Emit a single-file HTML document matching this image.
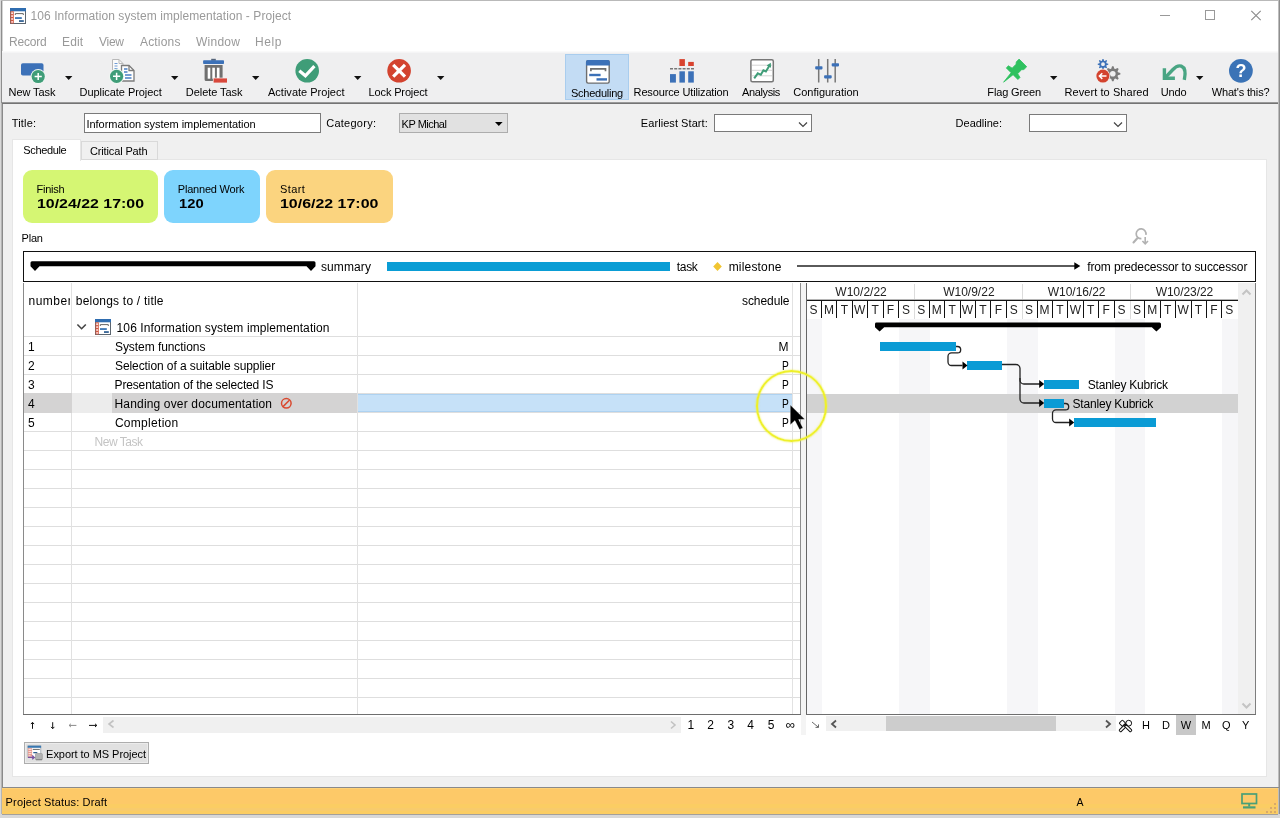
<!DOCTYPE html>
<html><head><meta charset="utf-8"><title>Project</title>
<style>
html,body{margin:0;padding:0;background:#f0f0f0;}
body{width:1280px;height:818px;position:relative;overflow:hidden;font-family:"Liberation Sans",sans-serif;}
.b{position:absolute;display:block;}
.t{position:absolute;white-space:nowrap;line-height:16px;height:16px;}
</style></head><body><div id="w" style="position:absolute;left:0;top:0;width:1280px;height:818px;will-change:transform">
<div class="b" style="left:0px;top:0px;width:1280px;height:818px;background:#f0f0f0;"></div>
<div class="b" style="left:0px;top:0px;width:1280px;height:53px;background:#ffffff;"></div>
<div class="b" style="left:0px;top:0px;width:1280px;height:1px;background:#b9b9b9;"></div>
<div class="b" style="left:0px;top:0px;width:1px;height:818px;background:#d8d8d8;"></div>
<div class="b" style="left:1px;top:1px;width:1px;height:102px;background:#8e8e8e;"></div>
<div class="b" style="left:2px;top:1px;width:1px;height:102px;background:#d4d4d4;"></div>
<div class="b" style="left:1px;top:103px;width:1px;height:712px;background:#b4b4b4;"></div>
<div class="b" style="left:2px;top:103px;width:1px;height:712px;background:#8a8a8a;"></div>
<div class="b" style="left:1278px;top:0px;width:1px;height:815px;background:#bdbdbd;"></div>
<div class="b" style="left:1279px;top:0px;width:1px;height:818px;background:#8e8e8e;"></div>
<svg class="b" style="left:10px;top:7.5px;" width="16" height="16" viewBox="0 0 16 16"><rect x="0.500" y="0.500" width="15" height="15" fill="#fff" stroke="#5c6670"/>
<rect x="0" y="0" width="16" height="3.300" fill="#2f6db0"/>
<rect x="0.500" y="3.300" width="3.300" height="12.200" fill="#d0583f"/>
<rect x="1.200" y="4.300" width="1.900" height="1.800" fill="#fbe3e0"/><rect x="1.200" y="7.200" width="1.900" height="1.800" fill="#fbd0cc"/><rect x="1.200" y="10.100" width="1.900" height="1.800" fill="#fbd0cc"/><rect x="1.200" y="13" width="1.900" height="1.800" fill="#fbc4c4"/>
<path d="M5.300 7v-1.400h8v1.400" fill="none" stroke="#666" stroke-width="1"/>
<rect x="5" y="9.200" width="6.800" height="1.700" fill="#2f6db0"/><rect x="9" y="12.200" width="4.800" height="1.700" fill="#2a5a8e"/></svg>
<div class="t" style="left:30.60px;top:8.00px;font-size:12px;color:#9a9a9a;letter-spacing:0.066px;">106 Information system implementation - Project</div>
<svg class="b" style="left:1160px;top:8px;" width="110" height="16" viewBox="0 0 110 16"><path d="M0 7.5h10" stroke="#999" stroke-width="1" fill="none"/>
<rect x="45.5" y="2.5" width="9" height="9" fill="none" stroke="#999"/>
<path d="M91.300 2.800l9.400 9.400M100.700 2.800l-9.400 9.400" stroke="#8a8a8a" stroke-width="1.100" fill="none"/></svg>
<div class="t" style="left:9.05px;top:34.00px;font-size:12px;color:#999999;letter-spacing:-0.192px;">Record</div>
<div class="t" style="left:62.05px;top:34.00px;font-size:12px;color:#999999;letter-spacing:0.118px;">Edit</div>
<div class="t" style="left:98.95px;top:34.00px;font-size:12px;color:#999999;letter-spacing:-0.248px;">View</div>
<div class="t" style="left:140.00px;top:34.00px;font-size:12px;color:#999999;letter-spacing:0.174px;">Actions</div>
<div class="t" style="left:195.95px;top:34.00px;font-size:12px;color:#999999;letter-spacing:0.274px;">Window</div>
<div class="t" style="left:255.05px;top:34.00px;font-size:12px;color:#999999;letter-spacing:0.581px;">Help</div>
<div class="b" style="left:2px;top:52px;width:1276px;height:50px;background:#efeff0;"></div>
<div class="b" style="left:2px;top:51px;width:1276px;height:1px;background:#fafafa;"></div>
<div class="b" style="left:2px;top:52px;width:1276px;height:1px;background:#f5f5f6;"></div>
<div class="b" style="left:2px;top:102px;width:1276px;height:1px;background:#999999;"></div>
<div class="b" style="left:2px;top:103px;width:1276px;height:1px;background:#747474;"></div>
<div class="b" style="left:565px;top:54px;width:64px;height:46px;background:#c3dcf4;border:1px solid #a9cdee;box-sizing:border-box;"></div>
<div class="t" style="left:8.60px;top:84.00px;font-size:11px;color:#000;letter-spacing:-0.083px;">New Task</div>
<div class="t" style="left:79.60px;top:84.00px;font-size:11px;color:#000;letter-spacing:-0.059px;">Duplicate Project</div>
<div class="t" style="left:185.85px;top:84.00px;font-size:11px;color:#000;letter-spacing:-0.062px;">Delete Task</div>
<div class="t" style="left:268.00px;top:84.00px;font-size:11px;color:#000;letter-spacing:0.009px;">Activate Project</div>
<div class="t" style="left:368.60px;top:84.00px;font-size:11px;color:#000;letter-spacing:-0.143px;">Lock Project</div>
<div class="t" style="left:633.60px;top:84.00px;font-size:11px;color:#000;letter-spacing:-0.145px;">Resource Utilization</div>
<div class="t" style="left:742.00px;top:84.00px;font-size:11px;color:#000;letter-spacing:-0.373px;">Analysis</div>
<div class="t" style="left:793.20px;top:84.00px;font-size:11px;color:#000;letter-spacing:0.003px;">Configuration</div>
<div class="t" style="left:987.35px;top:84.00px;font-size:11px;color:#000;letter-spacing:-0.135px;">Flag Green</div>
<div class="t" style="left:1064.60px;top:84.00px;font-size:11px;color:#000;letter-spacing:0.061px;">Revert to Shared</div>
<div class="t" style="left:1160.70px;top:84.00px;font-size:11px;color:#000;letter-spacing:-0.110px;">Undo</div>
<div class="t" style="left:1211.70px;top:84.00px;font-size:11px;color:#000;letter-spacing:-0.150px;">What&#x27;s this?</div>
<div class="t" style="left:571.00px;top:85.00px;font-size:11px;color:#000;letter-spacing:-0.252px;">Scheduling</div>
<svg class="b" style="left:65px;top:76px;" width="8" height="5" viewBox="0 0 8 5"><path d="M0 0h7.4l-3.7 4z" fill="#111"/></svg>
<svg class="b" style="left:171px;top:76px;" width="8" height="5" viewBox="0 0 8 5"><path d="M0 0h7.4l-3.7 4z" fill="#111"/></svg>
<svg class="b" style="left:251.75px;top:76px;" width="8" height="5" viewBox="0 0 8 5"><path d="M0 0h7.4l-3.7 4z" fill="#111"/></svg>
<svg class="b" style="left:354px;top:76px;" width="8" height="5" viewBox="0 0 8 5"><path d="M0 0h7.4l-3.7 4z" fill="#111"/></svg>
<svg class="b" style="left:437px;top:76px;" width="8" height="5" viewBox="0 0 8 5"><path d="M0 0h7.4l-3.7 4z" fill="#111"/></svg>
<svg class="b" style="left:1050px;top:76px;" width="8" height="5" viewBox="0 0 8 5"><path d="M0 0h7.4l-3.7 4z" fill="#111"/></svg>
<svg class="b" style="left:1195.75px;top:76px;" width="8" height="5" viewBox="0 0 8 5"><path d="M0 0h7.4l-3.7 4z" fill="#111"/></svg>
<svg class="b" style="left:18px;top:58px;" width="30" height="28" viewBox="0 0 30 28"><rect x="3" y="5.300" width="22.500" height="12.200" rx="1.800" fill="#3c71b8"/><circle cx="20.2" cy="18.5" r="7.6" fill="#eef6f1"/><circle cx="20.2" cy="18.5" r="6.6" fill="#3f9d78"/><path d="M16.599999999999998 18.5h7.200M20.2 14.9v7.200" stroke="#fff" stroke-width="1.500"/></svg>
<svg class="b" style="left:108px;top:57px;" width="30" height="28" viewBox="0 0 30 28"><path d="M4.500 2.500h6.500l4 4v9h-10.500z" fill="#fbfbfb" stroke="#b9b9b9" stroke-width="1"/>
<path d="M11 2.500v4h4" fill="none" stroke="#b9b9b9"/>
<path d="M6.500 6.500h3M6.500 9h3M6.500 11.500h3" stroke="#6f9bd6" stroke-width="1.200"/>
<path d="M13.500 8.500h7.500l5 5v10.500h-12.500z" fill="#fff" stroke="#7c7c7c" stroke-width="1.300"/>
<path d="M21 8.500v5h5" fill="none" stroke="#7c7c7c" stroke-width="1.300"/>
<path d="M16 12h3.500M16 15h3.500M17 18h6.500M17 21h6.500" stroke="#4a7fc4" stroke-width="1.400"/><circle cx="8.6" cy="19.3" r="7.6" fill="#eef6f1"/><circle cx="8.6" cy="19.3" r="6.6" fill="#3f9d78"/><path d="M5.0 19.3h7.200M8.6 15.700000000000001v7.200" stroke="#fff" stroke-width="1.500"/></svg>
<svg class="b" style="left:200px;top:57px;" width="30" height="28" viewBox="0 0 30 28"><rect x="11.200" y="1.800" width="4.600" height="2" fill="#56657a"/>
<rect x="3.100" y="3.300" width="20.900" height="3.700" rx="0.800" fill="#3c71b8"/>
<path d="M4.600 8h18v14.400a1.500 1.500 0 0 1-1.500 1.500h-15a1.500 1.500 0 0 1-1.500-1.500z" fill="#707070"/>
<rect x="7.700" y="10.700" width="2.600" height="11" fill="#fff"/><rect x="12.300" y="10.700" width="2.600" height="11" fill="#fff"/><rect x="16.900" y="10.700" width="2.600" height="11" fill="#fff"/>
<rect x="12.900" y="20.700" width="14.800" height="5.600" fill="#f4eeee"/>
<rect x="13.600" y="21.400" width="13.400" height="4.200" fill="#d8483c"/></svg>
<svg class="b" style="left:294px;top:58px;" width="26" height="26" viewBox="0 0 26 26"><circle cx="13.200" cy="12.800" r="11.800" fill="#3f9d78"/><path d="M5.300 12.800l6.100 5l9-9.600" fill="none" stroke="#fff" stroke-width="3.200"/></svg>
<svg class="b" style="left:386px;top:58px;" width="26" height="26" viewBox="0 0 26 26"><circle cx="13.100" cy="12.800" r="11.800" fill="#d3432f"/><path d="M7.200 6.900l11.800 11.800M19 6.900l-11.800 11.800" fill="none" stroke="#fff" stroke-width="3.200"/></svg>
<svg class="b" style="left:584px;top:58px;" width="28" height="28" viewBox="0 0 28 28"><rect x="2.600" y="2.700" width="22.600" height="22.400" rx="1.500" fill="#fff" stroke="#6e6e6e" stroke-width="1.400"/>
<path d="M2 4a2 2 0 0 1 2-2h19.800a2 2 0 0 1 2 2v3.500h-23.800z" fill="#3c71b8"/>
<path d="M6.900 13.200v-2.300h14.600v2.300" fill="none" stroke="#6e6e6e" stroke-width="1.700"/>
<rect x="5.200" y="15.800" width="11.400" height="2.400" fill="#3c71b8"/><rect x="12.500" y="20.200" width="10.500" height="2.400" fill="#3c71b8"/></svg>
<svg class="b" style="left:668px;top:57px;" width="28" height="28" viewBox="0 0 28 28"><rect x="11.400" y="2.100" width="5.500" height="6.900" fill="#d8432f"/><rect x="20.200" y="4.900" width="5.600" height="4.100" fill="#d8432f"/>
<path d="M2 11.700h24" stroke="#777" stroke-width="1.500" stroke-dasharray="3 1.200"/>
<rect x="2" y="17.100" width="5.900" height="8.500" fill="#3c71b8"/><rect x="11.400" y="14.300" width="5.500" height="11.300" fill="#3c71b8"/><rect x="20.200" y="14.300" width="5.600" height="11.300" fill="#3c71b8"/></svg>
<svg class="b" style="left:748px;top:57px;" width="28" height="28" viewBox="0 0 28 28"><rect x="2.900" y="2.800" width="22.400" height="22" rx="1.500" fill="#fff" stroke="#777" stroke-width="1.500"/>
<path d="M4 8.200h20M4 13.300h20M4 18.800h20" stroke="#d4d4d4" stroke-width="1"/>
<path d="M6.200 21.400l3.600-5.100l3 1.500l2.600-4.500l2.500 1.200l3.600-6" fill="none" stroke="#3f9d78" stroke-width="2"/>
<path d="M18.600 8.500l4.200-2.800l0.200 5z" fill="#3f9d78"/></svg>
<svg class="b" style="left:813px;top:57px;" width="28" height="28" viewBox="0 0 28 28"><path d="M5.700 2.100v23.500M14.700 2.100v23.500M22.200 2.100v23.500" stroke="#777" stroke-width="1.500"/>
<rect x="2.200" y="9.200" width="7.300" height="3.200" rx="0.800" fill="#3c71b8"/><rect x="11.100" y="18.300" width="7.600" height="3.100" rx="0.800" fill="#3c71b8"/><rect x="18.700" y="6.300" width="7.300" height="3.100" rx="0.800" fill="#3c71b8"/></svg>
<svg class="b" style="left:1000px;top:57px;" width="30" height="28" viewBox="0 0 30 28"><polygon points="3.60,25.20 13.08,17.70 17.88,22.51 20.00,20.39 17.67,16.64 21.56,12.75 23.89,12.54 26.72,9.71 19.09,2.08 16.26,4.91 16.05,7.24 12.16,11.13 8.41,8.80 6.29,10.92 11.10,15.72 3.60,25.20" fill="#2fc15f" stroke="#2fc15f" stroke-width="0.800" stroke-linejoin="round"/></svg>
<svg class="b" style="left:1093px;top:57px;" width="30" height="28" viewBox="0 0 30 28"><path d="M27.36 16.06L27.36 17.54L24.97 18.37L24.56 19.35L25.67 21.62L24.62 22.67L22.35 21.56L21.37 21.97L20.54 24.36L19.06 24.36L18.23 21.97L17.25 21.56L14.98 22.67L13.93 21.62L15.04 19.35L14.63 18.37L12.24 17.54L12.24 16.06L14.63 15.23L15.04 14.25L13.93 11.98L14.98 10.93L17.25 12.04L18.23 11.63L19.06 9.24L20.54 9.24L21.37 11.63L22.35 12.04L24.62 10.93L25.67 11.98L24.56 14.25L24.97 15.23ZM22.6 16.8a2.8 2.8 0 1 0 -5.6 0a2.8 2.8 0 1 0 5.6 0Z" fill="#7b7b7b" fill-rule="evenodd"/><path d="M15.27 6.68L15.27 7.72L13.54 8.27L13.26 8.94L14.10 10.56L13.36 11.30L11.74 10.46L11.07 10.74L10.52 12.47L9.48 12.47L8.93 10.74L8.26 10.46L6.64 11.30L5.90 10.56L6.74 8.94L6.46 8.27L4.73 7.72L4.73 6.68L6.46 6.13L6.74 5.46L5.90 3.84L6.64 3.10L8.26 3.94L8.93 3.66L9.48 1.93L10.52 1.93L11.07 3.66L11.74 3.94L13.36 3.10L14.10 3.84L13.26 5.46L13.54 6.13ZM11.9 7.2a1.9 1.9 0 1 0 -3.8 0a1.9 1.9 0 1 0 3.8 0Z" fill="#3c71b8" fill-rule="evenodd"/><circle cx="9.900" cy="19.100" r="7.300" fill="#f3ecea"/><circle cx="9.900" cy="19.100" r="6.500" fill="#d3432f"/><path d="M13.500 19.100h-7M9.300 16.300l-2.900 2.800l2.900 2.800" fill="none" stroke="#fff" stroke-width="1.500"/></svg>
<svg class="b" style="left:1158px;top:57px;" width="32" height="28" viewBox="0 0 32 28"><g fill="none" stroke="#49a583" stroke-width="3.400">
<path d="M26.300 22.900c1.400-6.500 1.200-12-3-13.700c-3.500-1.300-6 0.800-8.600 3.500l-7.200 7.600"/>
<path d="M6.400 11.200v10h10.500"/></g></svg>
<svg class="b" style="left:1228px;top:58px;" width="26" height="26" viewBox="0 0 26 26"><circle cx="12.900" cy="12.800" r="11.900" fill="#3b73b6"/><text x="12.900" y="19" text-anchor="middle" font-family="Liberation Sans, sans-serif" font-weight="bold" font-size="18" fill="#fff">?</text></svg>
<div class="t" style="left:11.80px;top:115.00px;font-size:11px;color:#000;letter-spacing:0.145px;">Title:</div>
<div class="b" style="left:84px;top:113px;width:237px;height:20px;background:#fff;border:1px solid #7a7a7a;box-sizing:border-box;"></div>
<div class="t" style="left:86.50px;top:116.00px;font-size:11px;color:#000;letter-spacing:-0.044px;">Information system implementation</div>
<div class="t" style="left:326.20px;top:115.00px;font-size:11px;color:#000;letter-spacing:0.258px;">Category:</div>
<div class="b" style="left:399px;top:113px;width:109px;height:20px;background:#e1e1e1;border:1px solid #adadad;box-sizing:border-box;"></div>
<div class="t" style="left:401.60px;top:116.00px;font-size:11px;color:#000;letter-spacing:-0.497px;">KP Michal</div>
<svg class="b" style="left:494.5px;top:121.5px;" width="8" height="5" viewBox="0 0 8 5"><path d="M0 0h7.6l-3.8 4z" fill="#000"/></svg>
<div class="t" style="left:640.85px;top:115.00px;font-size:11px;color:#000;letter-spacing:0.060px;">Earliest Start:</div>
<div class="b" style="left:714px;top:114px;width:98px;height:18px;background:#fff;border:1px solid #7a7a7a;box-sizing:border-box;"></div>
<svg class="b" style="left:798px;top:121px;" width="10" height="7" viewBox="0 0 10 7"><path d="M1 1.5l4 4l4-4" stroke="#444" stroke-width="1.2" fill="none"/></svg>
<div class="t" style="left:955.60px;top:115.00px;font-size:11px;color:#000;letter-spacing:-0.015px;">Deadline:</div>
<div class="b" style="left:1029px;top:114px;width:98px;height:18px;background:#fff;border:1px solid #7a7a7a;box-sizing:border-box;"></div>
<svg class="b" style="left:1113px;top:121px;" width="10" height="7" viewBox="0 0 10 7"><path d="M1 1.5l4 4l4-4" stroke="#444" stroke-width="1.2" fill="none"/></svg>
<div class="b" style="left:12px;top:159px;width:1255px;height:618px;background:#fff;border:1px solid #e6e6e6;box-sizing:border-box;"></div>
<div class="b" style="left:81px;top:141px;width:77px;height:19px;background:#f0f0f0;border:1px solid #d9d9d9;box-sizing:border-box;"></div>
<div class="b" style="left:12px;top:139px;width:69px;height:22px;background:#fff;border:1px solid #e6e6e6;border-bottom:none;box-sizing:border-box;"></div>
<div class="t" style="left:23.25px;top:142.00px;font-size:11px;color:#000;letter-spacing:-0.343px;">Schedule</div>
<div class="t" style="left:89.95px;top:143.00px;font-size:11px;color:#000;letter-spacing:-0.132px;">Critical Path</div>
<div class="b" style="left:22.5px;top:170px;width:135.5px;height:52.5px;background:#d5f673;border-radius:9px;"></div>
<div class="b" style="left:164px;top:170px;width:96px;height:52.5px;background:#7ed4fd;border-radius:9px;"></div>
<div class="b" style="left:266px;top:170px;width:127px;height:52.5px;background:#fbd47f;border-radius:9px;"></div>
<div class="t" style="left:36.60px;top:181.00px;font-size:11px;color:#000;letter-spacing:-0.255px;">Finish</div>
<div class="t" style="left:37.02px;top:196.00px;font-size:13px;color:#000;font-weight:bold;transform:scaleX(1.2237);transform-origin:0 0;">10/24/22 17:00</div>
<div class="t" style="left:177.85px;top:181.00px;font-size:11px;color:#000;letter-spacing:-0.213px;">Planned Work</div>
<div class="t" style="left:178.79px;top:196.00px;font-size:13px;color:#000;font-weight:bold;transform:scaleX(1.1346);transform-origin:0 0;">120</div>
<div class="t" style="left:280.10px;top:181.00px;font-size:11px;color:#000;letter-spacing:0.356px;">Start</div>
<div class="t" style="left:280.27px;top:196.00px;font-size:13px;color:#000;font-weight:bold;transform:scaleX(1.2262);transform-origin:0 0;">10/6/22 17:00</div>
<div class="t" style="left:21.60px;top:230.00px;font-size:11px;color:#000;letter-spacing:-0.249px;">Plan</div>
<svg class="b" style="left:1130px;top:227px;" width="22" height="20" viewBox="0 0 22 20"><g fill="none" stroke="#b2b2b2">
<path d="M15.900 7.800a4.900 4.900 0 1 0-4.500 3.900" stroke-width="1.700"/>
<path d="M7.300 11.300l-3.800 4.200" stroke-width="2.100" stroke-linecap="round"/>
<path d="M15.200 10v6.500M12.400 14l2.800 2.900l2.800-2.900" stroke-width="1.600"/></g></svg>
<div class="b" style="left:23px;top:251px;width:1233px;height:31px;background:#fff;border:1.5px solid #111;box-sizing:border-box;"></div>
<svg class="b" style="left:30px;top:261px;" width="286" height="10" viewBox="0 0 286 10"><path d="M2 0.3h282a1.5 1.5 0 0 1 1.5 1.5v3.4l-4.5 4.8l-4.5-4.8h-267l-4.500 4.8l-4.500-4.800v-3.400a1.500 1.500 0 0 1 1.500-1.500z" fill="#000"/></svg>
<div class="t" style="left:320.95px;top:259.00px;font-size:12px;color:#000;letter-spacing:0.119px;">summary</div>
<div class="b" style="left:387px;top:262.3px;width:282.7px;height:8.6px;background:#0a9dd5;"></div>
<div class="t" style="left:676.85px;top:259.00px;font-size:12px;color:#000;letter-spacing:-0.353px;">task</div>
<svg class="b" style="left:712px;top:261px;" width="11" height="11" viewBox="0 0 11 11"><path d="M5.5 1l4.300 4.500l-4.300 4.500l-4.300-4.500z" fill="#f1c531"/></svg>
<div class="t" style="left:728.65px;top:259.00px;font-size:12px;color:#000;letter-spacing:0.189px;">milestone</div>
<div class="b" style="left:796.5px;top:265.2px;width:279px;height:1.4px;background:#5a5a5a;"></div>
<svg class="b" style="left:1074px;top:262px;" width="7" height="8" viewBox="0 0 7 8"><path d="M0.300 0.300l6 3.700l-6 3.700z" fill="#000"/></svg>
<div class="t" style="left:1087.25px;top:259.00px;font-size:12px;color:#000;letter-spacing:-0.140px;">from predecessor to successor</div>
<div class="b" style="left:23px;top:283px;width:778px;height:432px;background:#fff;"></div>
<div class="b" style="left:24px;top:336px;width:776px;height:1px;background:#dedede;"></div>
<div class="b" style="left:24px;top:355px;width:776px;height:1px;background:#dedede;"></div>
<div class="b" style="left:24px;top:374px;width:776px;height:1px;background:#dedede;"></div>
<div class="b" style="left:24px;top:393px;width:776px;height:1px;background:#dedede;"></div>
<div class="b" style="left:24px;top:412px;width:776px;height:1px;background:#dedede;"></div>
<div class="b" style="left:24px;top:431px;width:776px;height:1px;background:#dedede;"></div>
<div class="b" style="left:24px;top:450px;width:776px;height:1px;background:#dedede;"></div>
<div class="b" style="left:24px;top:469px;width:776px;height:1px;background:#dedede;"></div>
<div class="b" style="left:24px;top:488px;width:776px;height:1px;background:#dedede;"></div>
<div class="b" style="left:24px;top:507px;width:776px;height:1px;background:#dedede;"></div>
<div class="b" style="left:24px;top:526px;width:776px;height:1px;background:#dedede;"></div>
<div class="b" style="left:24px;top:545px;width:776px;height:1px;background:#dedede;"></div>
<div class="b" style="left:24px;top:564px;width:776px;height:1px;background:#dedede;"></div>
<div class="b" style="left:24px;top:583px;width:776px;height:1px;background:#dedede;"></div>
<div class="b" style="left:24px;top:602px;width:776px;height:1px;background:#dedede;"></div>
<div class="b" style="left:24px;top:621px;width:776px;height:1px;background:#dedede;"></div>
<div class="b" style="left:24px;top:640px;width:776px;height:1px;background:#dedede;"></div>
<div class="b" style="left:24px;top:659px;width:776px;height:1px;background:#dedede;"></div>
<div class="b" style="left:24px;top:678px;width:776px;height:1px;background:#dedede;"></div>
<div class="b" style="left:24px;top:697px;width:776px;height:1px;background:#dedede;"></div>
<div class="b" style="left:71px;top:283px;width:1px;height:431px;background:#e1e1e1;"></div>
<div class="b" style="left:357px;top:283px;width:1px;height:431px;background:#e1e1e1;"></div>
<div class="b" style="left:792px;top:283px;width:1px;height:431px;background:#e2e2e2;"></div>
<div class="b" style="left:24px;top:393px;width:48px;height:20px;background:#d4d3d3;"></div>
<div class="b" style="left:72px;top:393px;width:40px;height:20px;background:#ececec;"></div>
<div class="b" style="left:112px;top:393px;width:245px;height:20px;background:#d4d3d3;"></div>
<div class="b" style="left:358px;top:394px;width:434px;height:18px;background:#c6e1f8;border-top:1px solid #aed2f1;border-bottom:1px solid #aed2f1;box-sizing:border-box;"></div>
<div class="b" style="left:23px;top:283px;width:1px;height:432px;background:#8a8a8a;"></div>
<div class="b" style="left:800px;top:283px;width:1px;height:432px;background:#8e8e8e;"></div>
<div class="b" style="left:23px;top:714px;width:778px;height:1px;background:#6e6e6e;"></div>
<div class="b" style="left:24px;top:290px;width:45.5px;height:20px;overflow:hidden">
<div class="t" style="left:4.500px;top:3px;font-size:12px;letter-spacing:0.500px">number</div></div>
<div class="t" style="left:75.75px;top:293.00px;font-size:12px;color:#000;letter-spacing:0.219px;">belongs to / title</div>
<div class="t" style="left:742.00px;top:293.00px;font-size:12px;color:#000;letter-spacing:-0.073px;">schedule</div>
<svg class="b" style="left:76px;top:323px;" width="12" height="8" viewBox="0 0 12 8"><path d="M1.400 1.500l4.200 4.200l4.200-4.200" stroke="#444" stroke-width="1.600" fill="none"/></svg>
<svg class="b" style="left:95px;top:319px;" width="16" height="16" viewBox="0 0 16 16"><rect x="0.500" y="0.500" width="15" height="15" fill="#fff" stroke="#5c6670"/>
<rect x="0" y="0" width="16" height="3.300" fill="#2f6db0"/>
<rect x="0.500" y="3.300" width="3.300" height="12.200" fill="#d0583f"/>
<rect x="1.200" y="4.300" width="1.900" height="1.800" fill="#fbe3e0"/><rect x="1.200" y="7.200" width="1.900" height="1.800" fill="#fbd0cc"/><rect x="1.200" y="10.100" width="1.900" height="1.800" fill="#fbd0cc"/><rect x="1.200" y="13" width="1.900" height="1.800" fill="#fbc4c4"/>
<path d="M5.300 7v-1.400h8v1.400" fill="none" stroke="#666" stroke-width="1"/>
<rect x="5" y="9.200" width="6.800" height="1.700" fill="#2f6db0"/><rect x="9" y="12.200" width="4.800" height="1.700" fill="#2a5a8e"/></svg>
<div class="t" style="left:116.60px;top:320.00px;font-size:12px;color:#000;letter-spacing:0.097px;">106 Information system implementation</div>
<div class="t" style="left:28.00px;top:339.00px;font-size:12px;color:#000;">1</div>
<div class="t" style="left:115.00px;top:339.00px;font-size:12px;color:#000;letter-spacing:-0.065px;">System functions</div>
<div class="t" style="left:778.50px;top:339.00px;font-size:12px;color:#000;">M</div>
<div class="t" style="left:28.00px;top:358.00px;font-size:12px;color:#000;">2</div>
<div class="t" style="left:115.00px;top:358.00px;font-size:12px;color:#000;letter-spacing:-0.083px;">Selection of a suitable supplier</div>
<div class="t" style="left:782.00px;top:358.00px;font-size:12px;color:#000;transform:scaleX(0.85);transform-origin:0 0;">P</div>
<div class="t" style="left:28.00px;top:377.00px;font-size:12px;color:#000;">3</div>
<div class="t" style="left:114.55px;top:377.00px;font-size:12px;color:#000;letter-spacing:-0.150px;">Presentation of the selected IS</div>
<div class="t" style="left:782.00px;top:377.00px;font-size:12px;color:#000;transform:scaleX(0.85);transform-origin:0 0;">P</div>
<div class="t" style="left:28.00px;top:396.00px;font-size:12px;color:#000;">4</div>
<div class="t" style="left:114.55px;top:396.00px;font-size:12px;color:#000;letter-spacing:0.161px;">Handing over documentation</div>
<div class="t" style="left:782.00px;top:396.00px;font-size:12px;color:#000;transform:scaleX(0.85);transform-origin:0 0;">P</div>
<div class="t" style="left:28.00px;top:415.00px;font-size:12px;color:#000;">5</div>
<div class="t" style="left:114.90px;top:415.00px;font-size:12px;color:#000;letter-spacing:0.297px;">Completion</div>
<div class="t" style="left:782.00px;top:415.00px;font-size:12px;color:#000;transform:scaleX(0.85);transform-origin:0 0;">P</div>
<svg class="b" style="left:279.5px;top:397px;" width="13" height="13" viewBox="0 0 13 13"><circle cx="6.300" cy="6.300" r="4.800" fill="none" stroke="#d9492f" stroke-width="1.500"/><path d="M3 9.600l6.600-6.600" stroke="#d9492f" stroke-width="1.500"/></svg>
<div class="t" style="left:94.55px;top:434.00px;font-size:12px;color:#c4c4c4;letter-spacing:-0.479px;">New Task</div>
<div class="b" style="left:801px;top:283px;width:5px;height:452px;background:#f4f4f4;"></div>
<div class="b" style="left:807px;top:283px;width:431px;height:431px;background:#fff;"></div>
<div class="b" style="left:806.6px;top:319px;width:15.4px;height:395px;background:#f6f6f8;"></div>
<div class="b" style="left:899.0px;top:319px;width:15.4px;height:395px;background:#f6f6f8;"></div>
<div class="b" style="left:914.4px;top:319px;width:15.4px;height:395px;background:#f6f6f8;"></div>
<div class="b" style="left:1006.8px;top:319px;width:15.4px;height:395px;background:#f6f6f8;"></div>
<div class="b" style="left:1022.2px;top:319px;width:15.4px;height:395px;background:#f6f6f8;"></div>
<div class="b" style="left:1114.6px;top:319px;width:15.4px;height:395px;background:#f6f6f8;"></div>
<div class="b" style="left:1130.0px;top:319px;width:15.4px;height:395px;background:#f6f6f8;"></div>
<div class="b" style="left:1222.4px;top:319px;width:15.4px;height:395px;background:#f6f6f8;"></div>
<div class="b" style="left:807px;top:394px;width:431px;height:19px;background:#d2d2d2;"></div>
<div class="b" style="left:807px;top:283px;width:431px;height:36px;background:#fff;"></div>
<div class="t" style="left:835.35px;top:284.00px;font-size:12px;color:#222;letter-spacing:0.008px;">W10/2/22</div>
<div class="t" style="left:943.15px;top:284.00px;font-size:12px;color:#222;letter-spacing:0.008px;">W10/9/22</div>
<div class="b" style="left:913.9px;top:284px;width:1px;height:35px;background:#dcdcdc;"></div>
<div class="t" style="left:1047.85px;top:284.00px;font-size:12px;color:#222;letter-spacing:-0.052px;">W10/16/22</div>
<div class="b" style="left:1021.7px;top:284px;width:1px;height:35px;background:#dcdcdc;"></div>
<div class="t" style="left:1155.65px;top:284.00px;font-size:12px;color:#222;letter-spacing:-0.052px;">W10/23/22</div>
<div class="b" style="left:1129.5px;top:284px;width:1px;height:35px;background:#dcdcdc;"></div>
<div class="b" style="left:807px;top:299px;width:431px;height:1px;background:#b5b5b5;"></div>
<div class="b" style="left:807px;top:300px;width:431px;height:1px;background:#151515;"></div>
<div class="t" style="left:809.50px;top:302.00px;font-size:12px;color:#222;">S</div>
<div class="t" style="left:823.90px;top:302.00px;font-size:12px;color:#222;">M</div>
<div class="b" style="left:821px;top:301px;width:1px;height:17px;background:#111;"></div>
<div class="t" style="left:840.63px;top:302.00px;font-size:12px;color:#222;">T</div>
<div class="b" style="left:836px;top:301px;width:1px;height:17px;background:#111;"></div>
<div class="t" style="left:854.04px;top:302.00px;font-size:12px;color:#222;">W</div>
<div class="b" style="left:852px;top:301px;width:1px;height:17px;background:#111;"></div>
<div class="t" style="left:871.43px;top:302.00px;font-size:12px;color:#222;">T</div>
<div class="b" style="left:867px;top:301px;width:1px;height:17px;background:#111;"></div>
<div class="t" style="left:886.83px;top:302.00px;font-size:12px;color:#222;">F</div>
<div class="b" style="left:883px;top:301px;width:1px;height:17px;background:#111;"></div>
<div class="t" style="left:901.90px;top:302.00px;font-size:12px;color:#222;">S</div>
<div class="b" style="left:898px;top:301px;width:1px;height:17px;background:#111;"></div>
<div class="t" style="left:917.30px;top:302.00px;font-size:12px;color:#222;">S</div>
<div class="t" style="left:931.70px;top:302.00px;font-size:12px;color:#222;">M</div>
<div class="b" style="left:929px;top:301px;width:1px;height:17px;background:#111;"></div>
<div class="t" style="left:948.43px;top:302.00px;font-size:12px;color:#222;">T</div>
<div class="b" style="left:944px;top:301px;width:1px;height:17px;background:#111;"></div>
<div class="t" style="left:961.84px;top:302.00px;font-size:12px;color:#222;">W</div>
<div class="b" style="left:960px;top:301px;width:1px;height:17px;background:#111;"></div>
<div class="t" style="left:979.23px;top:302.00px;font-size:12px;color:#222;">T</div>
<div class="b" style="left:975px;top:301px;width:1px;height:17px;background:#111;"></div>
<div class="t" style="left:994.63px;top:302.00px;font-size:12px;color:#222;">F</div>
<div class="b" style="left:990px;top:301px;width:1px;height:17px;background:#111;"></div>
<div class="t" style="left:1009.70px;top:302.00px;font-size:12px;color:#222;">S</div>
<div class="b" style="left:1006px;top:301px;width:1px;height:17px;background:#111;"></div>
<div class="t" style="left:1025.10px;top:302.00px;font-size:12px;color:#222;">S</div>
<div class="t" style="left:1039.50px;top:302.00px;font-size:12px;color:#222;">M</div>
<div class="b" style="left:1037px;top:301px;width:1px;height:17px;background:#111;"></div>
<div class="t" style="left:1056.23px;top:302.00px;font-size:12px;color:#222;">T</div>
<div class="b" style="left:1052px;top:301px;width:1px;height:17px;background:#111;"></div>
<div class="t" style="left:1069.64px;top:302.00px;font-size:12px;color:#222;">W</div>
<div class="b" style="left:1067px;top:301px;width:1px;height:17px;background:#111;"></div>
<div class="t" style="left:1087.03px;top:302.00px;font-size:12px;color:#222;">T</div>
<div class="b" style="left:1083px;top:301px;width:1px;height:17px;background:#111;"></div>
<div class="t" style="left:1102.43px;top:302.00px;font-size:12px;color:#222;">F</div>
<div class="b" style="left:1098px;top:301px;width:1px;height:17px;background:#111;"></div>
<div class="t" style="left:1117.50px;top:302.00px;font-size:12px;color:#222;">S</div>
<div class="b" style="left:1114px;top:301px;width:1px;height:17px;background:#111;"></div>
<div class="t" style="left:1132.90px;top:302.00px;font-size:12px;color:#222;">S</div>
<div class="t" style="left:1147.30px;top:302.00px;font-size:12px;color:#222;">M</div>
<div class="b" style="left:1144px;top:301px;width:1px;height:17px;background:#111;"></div>
<div class="t" style="left:1164.03px;top:302.00px;font-size:12px;color:#222;">T</div>
<div class="b" style="left:1160px;top:301px;width:1px;height:17px;background:#111;"></div>
<div class="t" style="left:1177.44px;top:302.00px;font-size:12px;color:#222;">W</div>
<div class="b" style="left:1175px;top:301px;width:1px;height:17px;background:#111;"></div>
<div class="t" style="left:1194.83px;top:302.00px;font-size:12px;color:#222;">T</div>
<div class="b" style="left:1191px;top:301px;width:1px;height:17px;background:#111;"></div>
<div class="t" style="left:1210.23px;top:302.00px;font-size:12px;color:#222;">F</div>
<div class="b" style="left:1206px;top:301px;width:1px;height:17px;background:#111;"></div>
<div class="t" style="left:1225.30px;top:302.00px;font-size:12px;color:#222;">S</div>
<div class="b" style="left:1221px;top:301px;width:1px;height:17px;background:#111;"></div>
<div class="b" style="left:1238px;top:283px;width:17px;height:431px;background:#f0f0f0;"></div>
<svg class="b" style="left:1241px;top:288px;" width="11" height="8" viewBox="0 0 11 8"><path d="M1.500 6.500l4-4l4 4" stroke="#c4c4c4" stroke-width="2" fill="none"/></svg>
<svg class="b" style="left:1241px;top:702px;" width="11" height="8" viewBox="0 0 11 8"><path d="M1.500 1.500l4 4l4-4" stroke="#c4c4c4" stroke-width="2" fill="none"/></svg>
<div class="b" style="left:806px;top:283px;width:1px;height:432px;background:#666;"></div>
<div class="b" style="left:1255px;top:283px;width:1px;height:432px;background:#7e7e7e;"></div>
<div class="b" style="left:806px;top:714px;width:450px;height:1px;background:#6e6e6e;"></div>
<svg class="b" style="left:875px;top:322px;" width="287" height="10" viewBox="0 0 287 10"><path d="M2 0.500h282.500a1.500 1.500 0 0 1 1.500 1.500v3.200l-4.600 4.400l-4.600-4.400h-267.600l-4.600 4.400l-4.600-4.400v-3.200a1.500 1.500 0 0 1 1.500-1.500z" fill="#000"/></svg>
<div class="b" style="left:880px;top:342px;width:76.2px;height:9px;background:#0a9bd5;"></div>
<div class="b" style="left:967.3px;top:361px;width:34.7px;height:9px;background:#0a9bd5;"></div>
<div class="b" style="left:1044.2px;top:380px;width:34.7px;height:9px;background:#0a9bd5;"></div>
<div class="b" style="left:1044.2px;top:399px;width:20px;height:9px;background:#0a9bd5;"></div>
<div class="b" style="left:1074.2px;top:418px;width:81.6px;height:9px;background:#0a9bd5;"></div>
<svg class="b" style="left:860px;top:330px;" width="240" height="110" viewBox="0 0 240 110"><g fill="none" stroke="#222" stroke-width="1.300">
<path d="M96 16.500h1.500a3.200 3.200 0 0 1 0 6.400h-6a3.500 3.500 0 0 0-3.500 3.500v5.600a3.500 3.500 0 0 0 3.500 3.500h11"/>
<path d="M142 34.500h14a4 4 0 0 1 4 4v11.500a4 4 0 0 0 4 4h16"/>
<path d="M160 48v21a4 4 0 0 0 4 4h16"/>
<path d="M204 73.500h1.500a3.200 3.200 0 0 1 0 6.400h-9.500a3.500 3.500 0 0 0-3.500 3.500v5.600a3.500 3.500 0 0 0 3.500 3.500h14"/>
</g>
<g fill="#000"><path d="M102.500 31.500l5 4l-5 4z"/><path d="M179.200 50l5 4l-5 4z"/><path d="M179.200 69l5 4l-5 4z"/><path d="M209.200 88.500l5 4l-5 4z"/></g></svg>
<div class="t" style="left:1087.80px;top:377.00px;font-size:12px;color:#000;letter-spacing:-0.227px;">Stanley Kubrick</div>
<div class="t" style="left:1072.50px;top:396.00px;font-size:12px;color:#000;letter-spacing:-0.191px;">Stanley Kubrick</div>
<svg class="b" style="left:28px;top:719px;" width="72" height="12" viewBox="0 0 72 12"><g stroke="#111" stroke-width="1" fill="none">
<path d="M4.500 9.800v-6.300M2.900 5.100l1.600-1.800l1.600 1.800"/>
<path d="M24.700 3.200v6.300M23.100 7.900l1.600 1.800l1.600-1.800"/>
<path d="M61 6.400h7.800M67 4.800l1.800 1.600l-1.800 1.600"/></g>
<path d="M48.400 6.400h-7.300M42.900 4.800l-1.800 1.600l1.800 1.600" stroke="#8a8a8a" stroke-width="1" fill="none"/></svg>
<div class="b" style="left:103px;top:716.5px;width:578px;height:16px;background:#f0f0f0;"></div>
<svg class="b" style="left:107px;top:718.5px;" width="8" height="10" viewBox="0 0 8 10"><path d="M6.500 1.500l-4.500 3.500l4.500 3.500" stroke="#c2c2c2" stroke-width="1.600" fill="none"/></svg>
<svg class="b" style="left:669px;top:720px;" width="8" height="10" viewBox="0 0 8 10"><path d="M2 1.500l4 3.500l-4 3.500" stroke="#c2c2c2" stroke-width="1.600" fill="none"/></svg>
<div class="t" style="left:687.46px;top:717.00px;font-size:12px;color:#000;">1</div>
<div class="t" style="left:707.36px;top:717.00px;font-size:12px;color:#000;">2</div>
<div class="t" style="left:727.46px;top:717.00px;font-size:12px;color:#000;">3</div>
<div class="t" style="left:747.36px;top:717.00px;font-size:12px;color:#000;">4</div>
<div class="t" style="left:767.66px;top:717.00px;font-size:12px;color:#000;">5</div>
<div class="t" style="left:785.87px;top:717.00px;font-size:13px;color:#000;">∞</div>
<svg class="b" style="left:810px;top:720px;" width="11" height="10" viewBox="0 0 11 10"><path d="M2 2l6.300 5.200M8.500 4.400v3h-3" stroke="#5a5a5a" stroke-width="0.900" fill="none"/></svg>
<div class="b" style="left:826px;top:716px;width:290px;height:15px;background:#f0f0f0;"></div>
<div class="b" style="left:886.4px;top:716px;width:169.6px;height:15px;background:#cdcdcd;"></div>
<svg class="b" style="left:830px;top:718.5px;" width="8" height="10" viewBox="0 0 8 10"><path d="M6 1.500l-4 3.500l4 3.500" stroke="#555" stroke-width="1.800" fill="none"/></svg>
<svg class="b" style="left:1104px;top:718.5px;" width="8" height="10" viewBox="0 0 8 10"><path d="M2 1.500l4 3.500l-4 3.500" stroke="#555" stroke-width="1.800" fill="none"/></svg>
<svg class="b" style="left:1118px;top:719px;" width="15" height="14" viewBox="0 0 15 14"><g fill="#fff" stroke="#111" stroke-width="1">
<rect x="-1.300" y="-1" width="2.600" height="9.500" rx="1" transform="translate(7.800 6.200) rotate(45)"/>
<rect x="-1.300" y="-1" width="2.600" height="9.500" rx="1" transform="translate(7.200 6.200) rotate(-45)"/>
<rect x="-2.300" y="-2.300" width="4.600" height="4.600" rx="0.800" transform="translate(4.400 4.200) rotate(45)" fill="none"/>
<circle cx="10.700" cy="4.200" r="2.900" fill="none"/></g>
<circle cx="7.500" cy="6" r="1.300" fill="#111"/></svg>
<div class="b" style="left:1176px;top:715px;width:20px;height:20px;background:#c8c8c8;"></div>
<div class="t" style="left:1142.03px;top:717.00px;font-size:11px;color:#000;">H</div>
<div class="t" style="left:1162.03px;top:717.00px;font-size:11px;color:#000;">D</div>
<div class="t" style="left:1180.81px;top:717.00px;font-size:11px;color:#000;">W</div>
<div class="t" style="left:1201.42px;top:717.00px;font-size:11px;color:#000;">M</div>
<div class="t" style="left:1221.92px;top:717.00px;font-size:11px;color:#000;">Q</div>
<div class="t" style="left:1242.03px;top:717.00px;font-size:11px;color:#000;">Y</div>
<div class="b" style="left:24px;top:742px;width:125px;height:22px;background:#e1e1e1;border:1px solid #adadad;box-sizing:border-box;box-shadow:inset 0 0 0 1px #ececec;"></div>
<svg class="b" style="left:27px;top:745px;" width="17" height="16" viewBox="0 0 17 16"><rect x="1" y="1" width="12.800" height="11.500" fill="#fff" stroke="#9aa3ad" stroke-width="0.800"/>
<rect x="0.700" y="0.700" width="13.400" height="2.100" fill="#3a78b0"/>
<rect x="0.900" y="3.200" width="4.200" height="8.500" fill="#e79a90"/>
<path d="M1.500 4.500h3M1.500 6.500h3M1.500 8.500h3M1.500 10.300h2" stroke="#fbe4e0" stroke-width="0.900"/>
<path d="M5.800 4.400h7" stroke="#555" stroke-width="0.900"/><rect x="6.300" y="7" width="4" height="1.300" fill="#2f5f8f"/>
<rect x="8.500" y="8.500" width="6.800" height="6.400" rx="0.800" fill="#b3b3b3" stroke="#9a9a9a" stroke-width="0.700"/>
<path d="M9 14.600h6" stroke="#7f7f7f" stroke-width="0.900"/>
<path d="M1 12.400h6M5.200 10.600l2 1.800l-2 1.800" stroke="#7a52a0" stroke-width="1.300" fill="none"/></svg>
<div class="t" style="left:46.10px;top:746.00px;font-size:11px;color:#000;letter-spacing:-0.048px;">Export to MS Project</div>
<div class="b" style="left:2px;top:787px;width:1277px;height:1px;background:#8a8a8a;"></div>
<div class="b" style="left:2px;top:788px;width:1276px;height:26px;background:#fdc968;"></div>
<div class="b" style="left:2px;top:804px;width:1276px;height:10px;background:#fbcd63;"></div>
<div class="b" style="left:2px;top:808px;width:1276px;height:3px;background:#f8cb6c;"></div>
<div class="b" style="left:2px;top:788px;width:1276px;height:1px;background:#ffd278;"></div>
<div class="b" style="left:0px;top:814px;width:1280px;height:4px;background:#d8d8d8;"></div>
<div class="b" style="left:2px;top:814px;width:1276px;height:1px;background:#a3a09b;"></div>
<div class="t" style="left:5.60px;top:794.00px;font-size:11px;color:#000;letter-spacing:0.151px;">Project Status: Draft</div>
<div class="t" style="left:1076.50px;top:794.00px;font-size:10.5px;color:#000;">A</div>
<svg class="b" style="left:1241px;top:792.5px;" width="17" height="17" viewBox="0 0 17 17"><rect x="1" y="1" width="14.500" height="9.500" fill="none" stroke="#4a9f77" stroke-width="1.700"/>
<path d="M8.200 10.500v3" stroke="#4a9f77" stroke-width="2"/><rect x="2" y="13.300" width="12.500" height="2.200" fill="#4a9f77"/></svg>
<svg class="b" style="left:1266px;top:803px;" width="12" height="12" viewBox="0 0 12 12"><g fill="#d8a96a"><rect x="8" y="8" width="2" height="2"/><rect x="8" y="4" width="2" height="2"/><rect x="4" y="8" width="2" height="2"/><rect x="8" y="0" width="2" height="2"/><rect x="4" y="4" width="2" height="2"/><rect x="0" y="8" width="2" height="2"/></g></svg>
<div class="b" style="left:755.900px;top:370.400px;width:71.400px;height:71.800px;border-radius:50%;border:2.600px solid #eef02a;box-sizing:border-box;box-shadow:0 0 1.500px 0.500px rgba(240,242,44,0.6), inset 0 0 1.500px 0.500px rgba(240,242,44,0.5)"></div>
<svg class="b" style="left:788px;top:402px;" width="20" height="30" viewBox="0 0 20 30"><path d="M2.300 2.900v19.800l4.600-4.200l4.600 9l3.400-1.600l-4.300-8.400l6.200-0.200z" fill="#000" stroke="#fff" stroke-width="0.500" stroke-opacity="0.6"/></svg>
</div></body></html>
